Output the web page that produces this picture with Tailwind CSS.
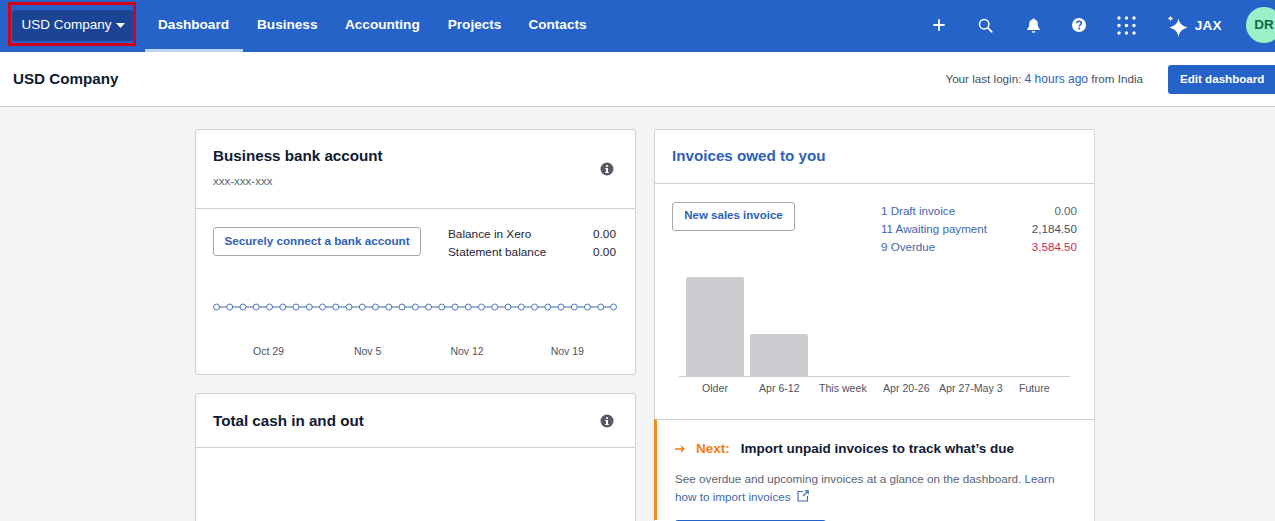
<!DOCTYPE html>
<html lang="en">
<head>
<meta charset="utf-8">
<title>USD Company</title>
<script src="https://cdn.jsdelivr.net/npm/@tailwindcss/browser@4"></script>
</head>
<body class="w-[1275px] h-[521px] overflow-hidden bg-[#f2f4f5] font-['Liberation_Sans',Arial,sans-serif] text-[#0e1a33]">
<header class="relative flex h-[52px] items-center bg-[#2563c9] text-white">
  <div class="absolute left-[8px] top-[2px] h-[44px] w-[128px] border-[3px] border-[#d5001c]"></div>
  <button class="mb-[1px] ml-[12px] flex h-[31px] w-[121px] items-center justify-center gap-[4px] rounded-[3px] bg-[#1c4494] pb-[1px] pl-[1px] text-[13.5px]">USD Company<svg width="9" height="5" viewBox="0 0 9 5"><path d="M0 0h9L4.500 5z" fill="#fff"/></svg></button>
  <nav class="ml-[12px] flex h-full pt-[1px] text-[13.6px] font-bold">
    <a class="flex items-center border-b-[3px] border-[#bcd3f2] pl-[13px] pr-[14px]">Dashboard</a>
    <a class="flex items-center pl-[14px] pr-[14.5px] pb-[3px]">Business</a>
    <a class="flex items-center pl-[13px] pr-[14px] pb-[3px]">Accounting</a>
    <a class="flex items-center px-[14px] pb-[3px]">Projects</a>
    <a class="flex items-center px-[13px] pb-[3px]">Contacts</a>
  </nav>
  <div class="ml-auto flex h-full items-center">
    <svg class="mb-[2px] mr-[33px]" width="12" height="12" viewBox="0 0 12 12"><path d="M6 1v10M1 6h10" stroke="#fff" stroke-width="1.800" stroke-linecap="round"/></svg>
    <svg class="mb-[2px] mr-[34px]" width="15" height="15" viewBox="0 0 15 15" fill="none"><circle cx="6.200" cy="6.200" r="4.700" stroke="#fff" stroke-width="1.500"/><path d="M9.800 9.800l4 4" stroke="#fff" stroke-width="1.700" stroke-linecap="round"/></svg>
    <svg class="mb-[2px] mr-[32px]" width="13" height="15" viewBox="0 0 13 15"><path d="M6.500 0.500c.8 0 1.200.5 1.300 1.100 2 .6 3 2.200 3 4.400 0 2.600.6 3.800 2 5v1H0.200v-1c1.400-1.200 2-2.400 2-5 0-2.200 1-3.800 3-4.400.100-.6.500-1.100 1.300-1.100zM4.800 13.200h3.400c0 1-.8 1.500-1.700 1.500s-1.700-.5-1.700-1.500z" fill="#fff"/></svg>
    <svg class="mb-[2px] mr-[31px]" width="14" height="14" viewBox="0 0 14 14"><circle cx="7" cy="7" r="7" fill="#fff"/><path d="M4.700 5.300c.1-1.400 1.100-2.100 2.400-2.100 1.300 0 2.300.8 2.300 1.900 0 1.800-2.200 1.700-2.200 3.400" fill="none" stroke="#2563c9" stroke-width="1.600"/><circle cx="7.200" cy="10.500" r="1" fill="#2563c9"/></svg>
    <svg class="mb-[2px] mr-[31px]" width="19" height="19" viewBox="0 0 19 19" fill="#fff"><circle cx="2" cy="2" r="1.700"/><circle cx="9.500" cy="2" r="1.700"/><circle cx="17" cy="2" r="1.700"/><circle cx="2" cy="9.500" r="1.700"/><circle cx="9.500" cy="9.500" r="1.700"/><circle cx="17" cy="9.500" r="1.700"/><circle cx="2" cy="17" r="1.700"/><circle cx="9.500" cy="17" r="1.700"/><circle cx="17" cy="17" r="1.700"/></svg>
    <svg class="mr-[7px]" width="21" height="23" viewBox="0 0 21 23" fill="#fff"><path d="M11.500 3.500C12.600 8.800 15 10.800 20.500 12.500 15 14.200 12.600 16.500 11.500 22 10.400 16.500 8 14.200 2.500 12.500 8 10.800 10.400 8.800 11.500 3.500z"/><path d="M3.500 0.500C3.900 2.300 4.700 3 6.500 3.500 4.700 4 3.900 4.700 3.500 6.500 3.100 4.700 2.300 4 0.500 3.500 2.300 3 3.100 2.300 3.500 0.500z"/></svg>
    <span class="mr-[24px] text-[13.6px] font-bold tracking-[0.3px]">JAX</span>
    <div class="-mr-[7px] mb-[2px] flex h-[36px] w-[36px] shrink-0 items-center justify-center rounded-full bg-[#9cf0c8] text-[13.5px] font-bold text-[#0b6b47]">DR</div>
  </div>
</header>

<div class="flex h-[55px] items-center border-b border-[#cdd0d3] bg-white">
  <h1 class="ml-[13px] text-[15.2px] font-bold">USD Company</h1>
  <p class="ml-auto mr-[25px] text-[11.65px] text-[#44505e]">Your last login: <a class="text-[12px] text-[#2e5fb8]">4 hours ago</a> from India</p>
  <button class="h-[29px] w-[107px] shrink-0 rounded-l-[3px] bg-[#2563c9] pb-[1px] pl-[12px] text-left text-[11.6px] font-bold whitespace-nowrap text-white">Edit dashboard</button>
</div>

<main class="flex items-start gap-[18px] pl-[195px] pt-[22px]">
  <div class="flex w-[441px] flex-col gap-[18px]">
    <section class="h-[246px] rounded-[3px] border border-[#ced1d5] bg-white">
      <div class="flex h-[79px] items-center justify-between border-b border-[#ced1d5] pl-[17px] pr-[21px]">
        <div>
          <h2 class="mt-[-4px] text-[15.2px] font-bold leading-[20px]">Business bank account</h2>
          <p class="mt-[8px] text-[11.500px] leading-[14px] text-[#5a6472]">xxx-xxx-xxx</p>
        </div>
        <svg width="14" height="14" viewBox="0 0 14 14"><circle cx="7" cy="7" r="6.500" fill="#565b66"/><rect x="6" y="6" width="2" height="5" fill="#fff"/><rect x="5.200" y="6" width="2" height="1" fill="#fff"/><rect x="5.200" y="10" width="3.600" height="1" fill="#fff"/><circle cx="7" cy="4" r="1.100" fill="#fff"/></svg>
      </div>
      <div class="relative px-[17px] pt-[18px]">
        <div class="flex items-start">
          <button class="h-[29px] w-[208px] rounded-[3px] border border-[#a4a8ae] pb-[1px] text-[11.700px] font-bold text-[#2e5fb8]">Securely connect a bank account</button>
          <dl class="-mt-[2px] ml-[27px] w-[168px] text-[11.800px] leading-[18px] text-[#1c2533]">
            <div class="flex justify-between"><dt>Balance in Xero</dt><dd>0.00</dd></div>
            <div class="flex justify-between"><dt>Statement balance</dt><dd>0.00</dd></div>
          </dl>
        </div>
        <svg class="mt-[41px] block" width="405" height="10" viewBox="0 0 405 10" fill="#fff" stroke="#4f79c4" stroke-width="1">
          <path d="M3 5H400" fill="none" stroke="#3f66ae"/>
          <circle cx="3.500" cy="5" r="3"/><circle cx="16.700" cy="5" r="3"/><circle cx="30" cy="5" r="3"/><circle cx="43.200" cy="5" r="3"/><circle cx="56.500" cy="5" r="3"/><circle cx="69.800" cy="5" r="3"/><circle cx="83" cy="5" r="3"/><circle cx="96.300" cy="5" r="3"/><circle cx="109.500" cy="5" r="3"/><circle cx="122.800" cy="5" r="3"/><circle cx="136" cy="5" r="3"/><circle cx="149.300" cy="5" r="3"/><circle cx="162.500" cy="5" r="3"/><circle cx="175.800" cy="5" r="3"/><circle cx="189" cy="5" r="3"/><circle cx="202.300" cy="5" r="3"/><circle cx="215.500" cy="5" r="3"/><circle cx="228.800" cy="5" r="3"/><circle cx="242" cy="5" r="3"/><circle cx="255.300" cy="5" r="3"/><circle cx="268.500" cy="5" r="3"/><circle cx="281.800" cy="5" r="3"/><circle cx="295" cy="5" r="3"/><circle cx="308.300" cy="5" r="3"/><circle cx="321.500" cy="5" r="3"/><circle cx="334.800" cy="5" r="3"/><circle cx="348" cy="5" r="3"/><circle cx="361.300" cy="5" r="3"/><circle cx="374.500" cy="5" r="3"/><circle cx="387.800" cy="5" r="3"/><circle cx="400.500" cy="5" r="3"/>
        </svg>
        <div class="mt-[33px] flex text-[10.500px] leading-[12px] text-[#4d5562]">
          <span class="ml-[40px]">Oct 29</span>
          <span class="ml-[70px]">Nov 5</span>
          <span class="ml-[69px]">Nov 12</span>
          <span class="ml-[67px]">Nov 19</span>
        </div>
      </div>
    </section>
    <section class="h-[200px] rounded-t-[3px] border border-[#ced1d5] bg-white">
      <div class="flex h-[54px] items-center justify-between border-b border-[#ced1d5] pl-[17px] pr-[21px]">
        <h2 class="mt-[1px] text-[15.2px] font-bold">Total cash in and out</h2>
        <svg width="14" height="14" viewBox="0 0 14 14"><circle cx="7" cy="7" r="6.500" fill="#565b66"/><rect x="6" y="6" width="2" height="5" fill="#fff"/><rect x="5.200" y="6" width="2" height="1" fill="#fff"/><rect x="5.200" y="10" width="3.600" height="1" fill="#fff"/><circle cx="7" cy="4" r="1.100" fill="#fff"/></svg>
      </div>
    </section>
  </div>

  <section class="h-[420px] w-[441px] rounded-t-[3px] border border-[#ced1d5] bg-white">
    <div class="flex h-[54px] items-center border-b border-[#ced1d5] pl-[17px]">
      <h2 class="text-[15.2px] font-bold text-[#2e5fb8]">Invoices owed to you</h2>
    </div>
    <div class="flex items-start pl-[17px] pr-[17px] pt-[18px]">
      <button class="h-[29px] w-[123px] rounded-[3px] border border-[#a4a8ae] pb-[1px] text-[11.500px] font-bold text-[#2e5fb8]">New sales invoice</button>
      <ul class="ml-auto w-[196px] text-[11.600px] leading-[18px]">
        <li class="flex justify-between"><a class="text-[#3f66ae]">1 Draft invoice</a><span class="text-[#5a6472]">0.00</span></li>
        <li class="flex justify-between"><a class="text-[#3f66ae]">11 Awaiting payment</a><span class="text-[#44505e]">2,184.50</span></li>
        <li class="flex justify-between"><a class="text-[#3f66ae]">9 Overdue</a><span class="text-[#cc1f5a]">3,584.50</span></li>
      </ul>
    </div>
    <div class="mx-[24px] mt-[21px] flex h-[100px] w-[391px] items-end gap-[6px] border-b border-[#ccced2] px-[7px]">
      <div class="h-[99px] w-[58px] rounded-t-[2px] bg-[#cbcdd0]"></div>
      <div class="h-[42px] w-[58px] rounded-t-[2px] bg-[#cbcdd0]"></div>
    </div>
    <div class="relative mt-[4px] h-[38px] text-[10.600px] leading-[14px] text-[#4d5562]">
      <span class="absolute left-[47px]">Older</span>
      <span class="absolute left-[104px]">Apr 6-12</span>
      <span class="absolute left-[164px]">This week</span>
      <span class="absolute left-[228px]">Apr 20-26</span>
      <span class="absolute left-[284px]">Apr 27-May 3</span>
      <span class="absolute left-[364px]">Future</span>
    </div>
    <div class="relative -ml-[1px] h-[101px] border-l-[3px] border-t border-l-[#f28c1e] border-t-[#ced1d5] pl-[18px] pt-[21px]">
      <div class="flex items-center text-[13.500px] font-bold leading-[16px]">
        <svg class="mr-[11px]" width="10" height="8" viewBox="0 0 10 8" fill="none" stroke="#f27c0e" stroke-width="1.300"><path d="M0 4h9M6 1l3 3-3 3"/></svg>
        <span class="mr-[11px] text-[#f27c0e]">Next:</span>
        <span>Import unpaid invoices to track what’s due</span>
      </div>
      <p class="mt-[13px] w-[385px] text-[11.700px] leading-[18px] text-[#5a6472]">See overdue and upcoming invoices at a glance on the dashboard. <a class="text-[#3f66ae]">Learn how to import invoices</a><svg class="ml-[6px] inline-block align-[-1px]" width="12" height="12" viewBox="0 0 12 12" fill="none" stroke="#3f66ae" stroke-width="1.100"><path d="M6 1.500H1v9.500h9.500V6M7.500 .8h3.700v3.700M11 1L6 6"/></svg></p>
      <div class="absolute left-[18px] top-[100px] h-[29px] w-[151px] rounded-t-[3px] bg-[#2563c9]"></div>
    </div>
  </section>
</main>
</body>
</html>
